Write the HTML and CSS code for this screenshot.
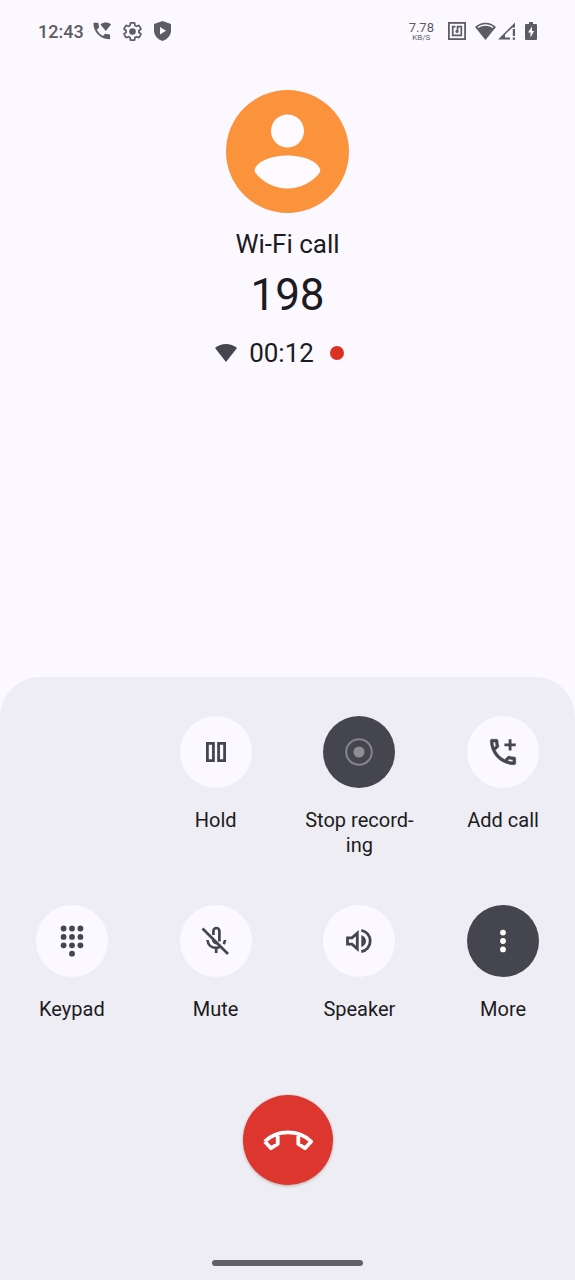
FILE: index.html
```
<!DOCTYPE html>
<html lang="en">
<head>
<meta charset="utf-8">
<meta name="viewport" content="width=device-width, initial-scale=1">
<title>Wi-Fi call</title>
<link rel="stylesheet" href="styles.css">
</head>
<body>
<div class="screen">
  <header class="status">
    <div class="status-left">
      <time class="clock">12:43</time>
      <svg class="call-status" width="18" height="18" viewBox="2.500 2.500 19.500 19" fill="currentColor" aria-hidden="true">
        <path d="M20 15.500c-1.250 0-2.450-.2-3.570-.57-.35-.11-.74-.03-1.020.24l-2.200 2.200c-2.830-1.440-5.150-3.750-6.590-6.590l2.200-2.210c.28-.26.36-.65.25-1C8.700 6.450 8.500 5.250 8.500 4c0-.55-.45-1-1-1H4c-.55 0-1 .45-1 1 0 9.390 7.610 17 17 17 .55 0 1-.45 1-1v-3.500c0-.55-.45-1-1-1z"/>
        <path d="M16.300 12 22 5c-3.400-2.800-8-2.800-11.400 0z"/>
      </svg>
      <svg class="gear" width="19" height="19" viewBox="1 1 22 22" fill="none" stroke="currentColor" stroke-width="2" aria-hidden="true">
        <path d="M19.430 12.980c.04-.32.07-.64.07-.98 0-.34-.03-.66-.07-.98l2.110-1.650c.19-.15.24-.42.12-.64l-2-3.460c-.09-.16-.26-.25-.44-.25-.06 0-.12.01-.17.03l-2.490 1c-.52-.4-1.080-.73-1.690-.98l-.38-2.650C14.460 2.180 14.250 2 14 2h-4c-.25 0-.46.18-.49.42l-.38 2.650c-.61.25-1.170.59-1.690.98l-2.490-1c-.06-.02-.12-.03-.18-.03-.17 0-.34.09-.43.25l-2 3.460c-.13.22-.07.49.12.64l2.110 1.650c-.04.32-.07.65-.07.98 0 .33.03.66.07.98l-2.110 1.650c-.19.15-.24.42-.12.64l2 3.460c.09.16.26.25.44.25.06 0 .12-.01.17-.03l2.490-1c.52.4 1.080.73 1.690.98l.38 2.650c.03.24.24.42.49.42h4c.25 0 .46-.18.49-.42l.38-2.650c.61-.25 1.170-.59 1.690-.98l2.490 1c.06.02.12.03.18.03.17 0 .34-.09.43-.25l2-3.460c.12-.22.07-.49-.12-.64l-2.110-1.650z"/>
        <circle cx="12" cy="12" r="3.800" fill="currentColor" stroke="none"/>
      </svg>
      <svg class="shield" width="17" height="20" viewBox="0 0 17 20" aria-hidden="true">
        <path d="M8.500 0 17 3v6.500c0 5-3.600 9-8.500 10.500C3.600 18.500 0 14.500 0 9.500V3z" fill="currentColor"/>
        <path d="M6 6v7.500l6-3.750z" fill="#fbf9ff"/>
      </svg>
    </div>
    <div class="status-right">
      <div class="speed"><span class="speed-value">7.78</span><span class="speed-unit">KB/S</span></div>
      <svg class="nfc" width="18" height="18" viewBox="0 0 18 18" fill="none" stroke="currentColor" aria-hidden="true">
        <rect x="0.900" y="0.900" width="16.200" height="16.200" stroke-width="1.800"/>
        <path d="M7.500 4.700H4.700v8.600h8.600V4.700H9.500V9" stroke-width="1.700"/>
        <circle cx="9" cy="9.500" r="1.600" fill="currentColor" stroke="none"/>
      </svg>
      <svg class="wifi-status" width="21" height="18" viewBox="0 0 21 18" aria-hidden="true">
        <path d="M10.500 18 0 5C6-.8 15-.8 21 5z" fill="currentColor"/>
        <path d="M2.600 5.100C7.500 1.300 13.500 1.300 18.400 5.100L17.600 6.100C13 3 8 3 3.400 6.100z" fill="#fbf9ff"/>
      </svg>
      <svg class="signal" width="18" height="18" viewBox="0 0 18 18" fill="currentColor" aria-hidden="true">
        <path d="M0 17.500 17 .5V5.500H14.500L7 12.500V15.500H12V17.500z"/>
        <path d="M14.800 7H17v7h-2.200zM14.800 15.500H17v2.200h-2.200z"/>
      </svg>
      <svg class="battery" width="12" height="18" viewBox="0 0 12 18" aria-hidden="true">
        <path d="M4 0h4v2h3q1 0 1 1v14q0 1-1 1H1q-1 0-1-1V3q0-1 1-1h3z" fill="currentColor"/>
        <path d="M7 4.500 3 10.500H5.500v5L9.200 9H7z" fill="#fbf9ff"/>
      </svg>
    </div>
  </header>

  <main class="caller">
    <svg class="avatar" width="123" height="123" viewBox="0 0 123 123" role="img" aria-label="Contact photo">
      <circle cx="61.500" cy="61.500" r="61.500" fill="#fb923c"/>
      <circle cx="61.500" cy="41" r="16.500" fill="#fdfbff"/>
      <path d="M29 79C32 70.500 47 65.600 61.500 65.600S91 70.500 94 79Q95 81.500 93.500 83C86 93 73 98.400 61.500 98.400S37 93 29.500 83Q28 81.500 29 79z" fill="#fdfbff"/>
    </svg>
    <p class="call-type">Wi-Fi call</p>
    <h1 class="number">198</h1>
    <div class="timer">
      <svg width="22" height="18" viewBox="0 0 22 18" aria-hidden="true"><path d="M11 18 0 4C6.500-1.200 15.500-1.200 22 4z" fill="#45454f"/></svg>
      <time>00:12</time>
      <span class="rec-dot"></span>
    </div>
  </main>

  <section class="sheet">
    <div class="actions">
      <button class="action first" type="button">
        <span class="disc"><svg width="20" height="20" viewBox="0 0 20 20" fill="none" stroke="currentColor" stroke-width="2.800" aria-hidden="true"><path d="M1.400 1.400h6v17.200h-6zM12.600 1.400h6v17.200h-6z"/></svg></span>
        <span class="label">Hold</span>
      </button>
      <button class="action on" type="button">
        <span class="disc"><svg width="28" height="28" viewBox="0 0 28 28" aria-hidden="true"><circle cx="14" cy="14" r="12.800" fill="none" stroke="#85848c" stroke-width="2"/><circle cx="14" cy="14" r="5.600" fill="#8e8d94"/></svg></span>
        <span class="label">Stop record&shy;ing</span>
      </button>
      <button class="action" type="button">
        <span class="disc"><svg width="34" height="34" viewBox="0 0 24 24" fill="currentColor" aria-hidden="true"><path d="M6.540 5c.06.89.21 1.760.45 2.590l-1.200 1.200c-.41-1.200-.67-2.470-.76-3.790h1.510m9.860 12.020c.85.24 1.720.39 2.600.45v1.490c-1.320-.09-2.590-.35-3.800-.75l1.200-1.190M7.500 3H4c-.55 0-1 .45-1 1 0 9.390 7.610 17 17 17 .55 0 1-.45 1-1v-3.490c0-.55-.45-1-1-1-1.240 0-2.450-.2-3.570-.57-.1-.04-.21-.05-.31-.05-.26 0-.51.1-.71.29l-2.200 2.200c-2.830-1.450-5.150-3.760-6.590-6.590l2.200-2.200c.28-.28.36-.67.25-1.020C8.700 6.450 8.500 5.250 8.500 4c0-.55-.45-1-1-1z" stroke="currentColor" stroke-width="0.300"/><path d="M16 3h2v3h3v2h-3v3h-2V8h-3V6h3z"/></svg></span>
        <span class="label">Add call</span>
      </button>
      <button class="action" type="button">
        <span class="disc"><svg width="24" height="32" viewBox="0 0 24 32" fill="currentColor" aria-hidden="true"><circle cx="3.600" cy="3.500" r="2.900"/><circle cx="12" cy="3.500" r="2.900"/><circle cx="20.400" cy="3.500" r="2.900"/><circle cx="3.600" cy="11.900" r="2.900"/><circle cx="12" cy="11.900" r="2.900"/><circle cx="20.400" cy="11.900" r="2.900"/><circle cx="3.600" cy="20.300" r="2.900"/><circle cx="12" cy="20.300" r="2.900"/><circle cx="20.400" cy="20.300" r="2.900"/><circle cx="12" cy="28.700" r="2.900"/></svg></span>
        <span class="label">Keypad</span>
      </button>
      <button class="action" type="button">
        <span class="disc"><svg width="32" height="32" viewBox="0 0 32 32" fill="none" stroke="currentColor" stroke-width="2.700" aria-hidden="true"><path d="M2.500 3.500 28 29M13.400 10V6a3 3 0 0 1 6 0V16.500M7.500 15c.4 5 4 7.800 8.600 7.800 1.800 0 3-.4 4.200-1M16.200 22.500V28M25 15q-.1 2.200-1.500 4"/><path d="M12 13.500v2q.6 3.600 4.500 3.900L18 19z" fill="currentColor" stroke="none"/></svg></span>
        <span class="label">Mute</span>
      </button>
      <button class="action" type="button">
        <span class="disc"><svg width="26" height="26" viewBox="0 0 26 26" aria-hidden="true"><path d="M1.500 9.900H6l5.300-4.700v15.600L6 16.100H1.500z" fill="none" stroke="currentColor" stroke-width="2.800"/><path d="M15.300 7q4.700 2 4.700 6t-4.700 6z" fill="currentColor"/><path d="M15.300 2.300c5 .9 8.900 5 8.900 10.700s-3.900 9.800-8.900 10.700" fill="none" stroke="currentColor" stroke-width="2.800"/></svg></span>
        <span class="label">Speaker</span>
      </button>
      <button class="action on" type="button">
        <span class="disc"><svg width="6" height="24" viewBox="0 0 6 24" fill="#fff" aria-hidden="true"><circle cx="3" cy="3.600" r="2.900"/><circle cx="3" cy="12" r="2.900"/><circle cx="3" cy="20.400" r="2.900"/></svg></span>
        <span class="label">More</span>
      </button>
    </div>
    <button class="end" type="button" aria-label="End call">
      <svg width="52" height="24" viewBox="0 0 52 24" fill="none" stroke="#fff" stroke-width="3.800" stroke-linejoin="round" aria-hidden="true"><path d="M2.800 13.500C15 1.200 37 1.200 49.200 13.500L43 20.200 36.300 16V6.500M2.800 13.500 9 20.200 15.700 16V6.500"/></svg>
    </button>
    <div class="home-bar"></div>
  </section>
</div>
</body>
</html>
```
FILE: styles.css
```
* { box-sizing: border-box; }
body {
  margin: 0;
  background: #fbf9ff;
  color: #1c1b22;
  font-family: Roboto, "Noto Sans", sans-serif;
}
.screen {
  min-height: 100vh;
  display: flex;
  flex-direction: column;
}
.status {
  display: flex;
  justify-content: space-between;
  align-items: center;
  height: 62px;
  padding: 0 38px;
  color: #5d5c63;
}
.status-left, .status-right { display: flex; align-items: center; }
.status-left { gap: 12px; }
.call-status { margin-left: -3px; }
.status-right { gap: 9px; }
.clock { font-size: 18px; font-weight: 500; }
.speed {
  display: flex;
  flex-direction: column;
  align-items: center;
  margin-right: 5px;
}
.speed-value { font-size: 13px; line-height: 13px; }
.speed-unit { font-size: 8px; line-height: 8px; }
.wifi-status { margin-right: -7px; }
.caller {
  flex: 1;
  display: flex;
  flex-direction: column;
  align-items: center;
  padding-top: 28px;
}
.avatar { display: block; }
.call-type {
  margin: 15px 0 0;
  font-size: 26px;
  line-height: 32px;
}
.number {
  margin: 7px 0 0;
  font-size: 44px;
  line-height: 56px;
  font-weight: 400;
}
.timer {
  display: flex;
  align-items: center;
  gap: 12px;
  margin: 14px 16px 0 0;
  font-size: 26px;
  line-height: 32px;
}
.rec-dot {
  width: 14px;
  height: 14px;
  margin-left: 4px;
  border-radius: 50%;
  background: #dc3023;
}
.sheet {
  display: flex;
  flex-direction: column;
  align-items: center;
  padding: 39px 0 14px;
  border-radius: 40px 40px 0 0;
  background: #eeedf3;
}
.actions {
  align-self: stretch;
  display: grid;
  grid-template-columns: repeat(4, 1fr);
  row-gap: 47px;
}
button {
  border: 0;
  padding: 0;
  color: inherit;
  font: inherit;
  cursor: pointer;
}
.action {
  display: flex;
  flex-direction: column;
  align-items: center;
  justify-content: flex-start;
  gap: 20px;
  background: none;
}
.first { grid-column-start: 2; }
.disc {
  display: grid;
  place-items: center;
  width: 72px;
  height: 72px;
  border-radius: 50%;
  background: #fbf9ff;
  color: #45454f;
}
.on .disc { background: #45454f; }
.label {
  max-width: 120px;
  font-size: 20px;
  line-height: 25px;
}
.end {
  display: grid;
  place-items: center;
  width: 90px;
  height: 90px;
  margin-top: 73px;
  border-radius: 50%;
  background: #dc362e;
  box-shadow: 0 1px 3px rgba(60, 20, 20, 0.3);
}
.home-bar {
  width: 151px;
  height: 6px;
  margin-top: 75px;
  border-radius: 3px;
  background: #606067;
}
```
